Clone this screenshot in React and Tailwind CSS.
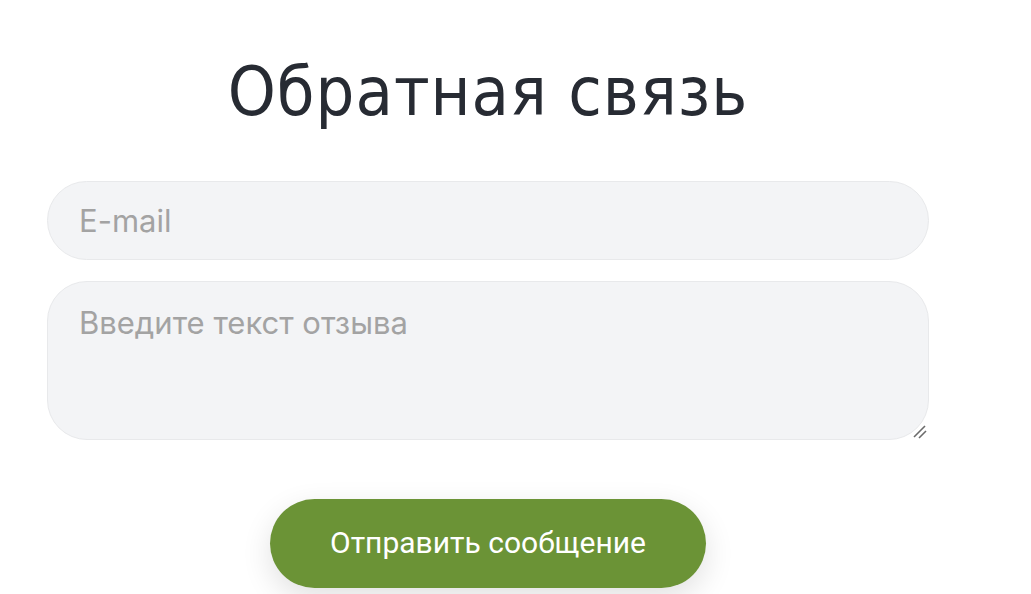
export default function App() {
  return (
    <div className="min-h-screen bg-white" style={{ fontFamily: 'Inter, "Liberation Sans", Arial, sans-serif' }}>
      <div className="ml-[47px] w-[882px] pt-[52px]">
        <h1
          className="text-center text-[68px] leading-[80px] text-[#272b33] tracking-[1px]"
          style={{ fontFamily: '"DejaVu Sans Condensed", "DejaVu Sans", sans-serif' }}
        >
          Обратная связь
        </h1>
        <form className="mt-[49px] flex flex-col gap-[21px]" onSubmit={(e) => e.preventDefault()}>
          <input
            type="text"
            placeholder="E-mail"
            className="h-[79px] w-full rounded-full border border-[#e8e9eb] bg-[#f3f4f6] px-[31px] text-[31px] text-[#333] placeholder:text-[#a3a3a3] outline-none"
          />
          <div className="relative">
            <textarea
              placeholder="Введите текст отзыва"
              className="block h-[159px] w-full resize-none rounded-[40px] border border-[#e8e9eb] bg-[#f3f4f6] px-[31px] py-[21px] text-[31px] leading-[40px] text-[#333] placeholder:text-[#a3a3a3] outline-none"
            />
            <svg className="pointer-events-none absolute bottom-[1px] right-[2px]" width="16" height="16" viewBox="0 0 16 16">
              <line x1="3" y1="14" x2="14" y2="3" stroke="#6b6b6b" strokeWidth="1.6" />
              <line x1="8" y1="15" x2="15" y2="8" stroke="#6b6b6b" strokeWidth="1.6" />
            </svg>
          </div>
          <div className="mt-[38px] flex justify-center">
            <button
              type="submit"
              className="h-[89px] w-[436px] rounded-full bg-[#6b9336] pb-[3px] text-[30px] text-white shadow-[0_10px_30px_rgba(0,0,0,0.12)]"
              style={{ fontFamily: 'Roboto, sans-serif' }}
            >
              Отправить сообщение
            </button>
          </div>
        </form>
      </div>
    </div>
  );
}
